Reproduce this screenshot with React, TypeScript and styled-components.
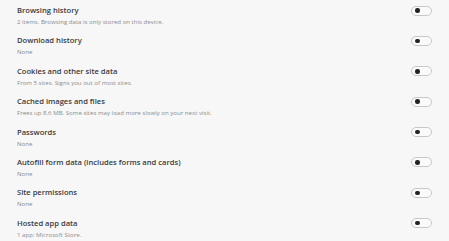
import React from "react";
import styled, { createGlobalStyle } from "styled-components";

const GlobalStyle = createGlobalStyle`
  html, body {
    margin: 0;
    padding: 0;
    background: #f7f7f7;
  }
`;

const items = [
  { title: "Browsing history", desc: "2 items. Browsing data is only stored on this device." },
  { title: "Download history", desc: "None" },
  { title: "Cookies and other site data", desc: "From 5 sites. Signs you out of most sites." },
  { title: "Cached images and files", desc: "Frees up 8.6 MB. Some sites may load more slowly on your next visit." },
  { title: "Passwords", desc: "None" },
  { title: "Autofill form data (includes forms and cards)", desc: "None" },
  { title: "Site permissions", desc: "None" },
  { title: "Hosted app data", desc: "1 app: Microsoft Store." },
];

const Page = styled.div`
  width: 449px;
  height: 241px;
  overflow: hidden;
  background: #f7f7f7;
  font-family: "Open Sans", "Noto Sans", sans-serif;
  padding: 4px 17px 0 17px;
  box-sizing: border-box;
`;

const Row = styled.div`
  display: flex;
  align-items: flex-start;
  justify-content: space-between;
  height: 30.4px;
`;

const TextBlock = styled.div`
  display: flex;
  flex-direction: column;
`;

const Title = styled.div`
  font-size: 7.6px;
  font-weight: 600;
  color: #3a3a3a;
  line-height: 13px;
`;

const Desc = styled.div`
  font-size: 6.1px;
  color: #8c8c8c;
  line-height: 10px;
`;

const Toggle = styled.div`
  width: 16px;
  height: 8px;
  margin-top: 1.5px;
  border: 1px solid #c8c8c8;
  border-radius: 6px;
  background: #fafafa;
  display: flex;
  align-items: center;
  padding-left: 3px;
  box-sizing: content-box;
`;

const Knob = styled.span`
  width: 4.5px;
  height: 4.5px;
  border-radius: 50%;
  background: #222;
`;

export default function App() {
  return (
    <Page>
      <GlobalStyle />
      {items.map((it) => (
        <Row key={it.title}>
          <TextBlock>
            <Title>{it.title}</Title>
            <Desc>{it.desc}</Desc>
          </TextBlock>
          <Toggle>
            <Knob />
          </Toggle>
        </Row>
      ))}
    </Page>
  );
}
